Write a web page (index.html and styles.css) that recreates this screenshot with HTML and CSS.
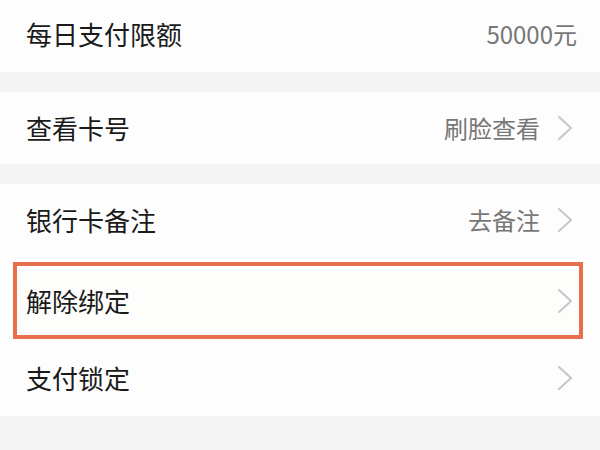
FILE: index.html
```html
<!DOCTYPE html>
<html lang="zh-CN">
<head>
<meta charset="utf-8">
<link rel="stylesheet" href="styles.css">
</head>
<body>
<div class="page">
  <div class="group">
    <div class="row row-first">
      <span class="label">每日支付限额</span>
      <span class="value value-plain">50000元</span>
    </div>
  </div>
  <div class="group">
    <div class="row">
      <span class="label">查看卡号</span>
      <span class="value">刷脸查看</span>
      <svg class="chev" viewBox="0 0 14 24" width="14" height="24"><polyline points="1,1 13,12 1,23"/></svg>
    </div>
  </div>
  <div class="group">
    <div class="row">
      <span class="label">银行卡备注</span>
      <span class="value">去备注</span>
      <svg class="chev" viewBox="0 0 14 24" width="14" height="24"><polyline points="1,1 13,12 1,23"/></svg>
    </div>
    <div class="row-wrap">
      <div class="row row-marked">
        <span class="label">解除绑定</span>
        <svg class="chev" viewBox="0 0 14 24" width="14" height="24"><polyline points="1,1 13,12 1,23"/></svg>
      </div>
    </div>
    <div class="row row-last">
      <span class="label">支付锁定</span>
      <svg class="chev" viewBox="0 0 14 24" width="14" height="24"><polyline points="1,1 13,12 1,23"/></svg>
    </div>
  </div>
</div>
</body>
</html>
```
FILE: styles.css
```css
html, body {
  margin: 0;
  padding: 0;
  background: #f3f3f4;
}
body {
  width: 600px;
  height: 450px;
  overflow: hidden;
  font-family: "Noto Sans CJK SC", "Noto Sans", sans-serif;
}
.page {
  display: flex;
  flex-direction: column;
  gap: 20px;
}
.group {
  background: #fdfdfd;
  display: flex;
  flex-direction: column;
}
.row {
  display: flex;
  align-items: center;
  height: 72px;
  padding: 0 28px 0 26px;
  box-sizing: border-box;
}
.row-first {
  padding-right: 23px;
  padding-bottom: 5px;
}
.row-wrap {
  padding: 6px 17px 0 13px;
}
.row-marked {
  height: 77px;
  border: 4px solid #e86f4c;
  padding: 0 7px 0 9px;
  background: #fdfdfc;
}
.row-last {
  height: 77px;
}
.label {
  font-size: 26px;
  color: #1a1a1a;
  line-height: 1;
  flex: 1;
}
.value {
  font-size: 24px;
  color: #777777;
  line-height: 1;
  margin-right: 18px;
}
.value-plain {
  margin-right: 0;
}
.chev {
  display: block;
  flex: none;
}
.chev polyline {
  fill: none;
  stroke: #c6c6c6;
  stroke-width: 2;
  stroke-linecap: round;
  stroke-linejoin: round;
}
```
